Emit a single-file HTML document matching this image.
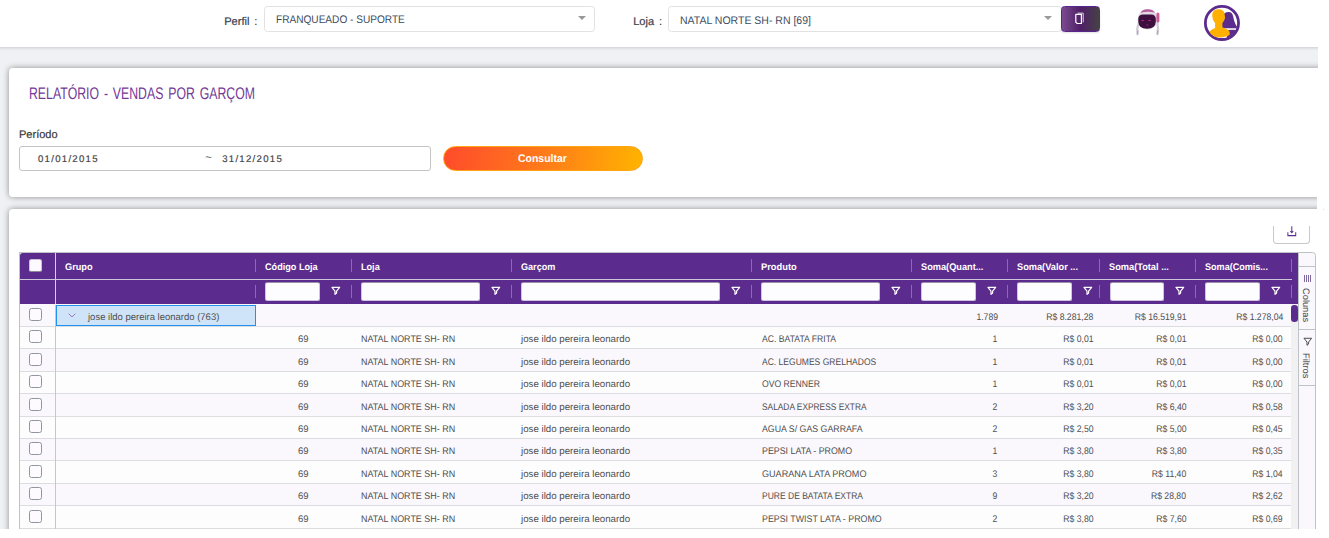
<!DOCTYPE html>
<html lang="pt-BR">
<head>
<meta charset="utf-8">
<title>Relatório - Vendas por Garçom</title>
<style>
*{box-sizing:border-box;margin:0;padding:0}
html,body{width:1329px;height:538px;overflow:hidden;background:#fff}
body{font-family:"Liberation Sans",sans-serif;color:#333;position:relative;text-rendering:geometricPrecision}
#app{position:absolute;left:0;top:0;width:1318px;height:529px;overflow:hidden;background:#f0f1f4}
.topbar{position:absolute;left:-10px;top:-10px;width:1350px;height:56.8px;background:#fff;box-shadow:0 1px 3px rgba(0,21,41,.16)}
.abs{position:absolute}
h1{font-weight:400}
.x{position:absolute;white-space:pre;line-height:20px;height:20px;transform-origin:0 50%}
.sel{position:absolute;top:6px;height:26px;border:1px solid #e2e2e2;border-radius:3.5px;background:#fff}
.caret{position:absolute;top:15.6px;width:0;height:0;border-left:4px solid transparent;border-right:4px solid transparent;border-top:4.5px solid #999}
.copybtn{position:absolute;left:1061px;top:6px;width:39px;height:26px;border-radius:3.5px;border:1px solid #5b2590;background:linear-gradient(90deg,#7a4b8e 0%,#4f1f68 50%,#464146 100%);box-shadow:0 1px 2px rgba(0,0,0,.12)}
.card{position:absolute;left:9.2px;width:1330px;background:#fff;border-radius:4px;box-shadow:0 0 6.2px rgba(0,0,0,.41)}
#c1{top:67.6px;height:129.6px}
#c2{top:208.7px;height:340px}
.range{position:absolute;left:19.2px;top:146.2px;width:411.6px;height:24.6px;border:1px solid #c4c4c4;border-radius:3px;background:#fff}
.btn{position:absolute;left:443px;top:146px;width:200px;height:25px;border-radius:12.5px;border:1px solid #ffa412;background:linear-gradient(100deg,#ff4b2b 0%,#ff7a1a 50%,#ffb400 100%)}
.dl{position:absolute;left:1273px;top:214px;width:37px;height:30px;border:1px solid #c8c8c8;border-top:none;border-radius:0 0 4px 4px;background:#fff}
.dl:before{content:"";position:absolute;left:-1px;right:-1px;top:0;height:11.6px;background:#fff}
.dl svg{position:absolute;left:13.2px;top:11.6px}
/* grid */
.gb{position:absolute;left:19.2px;top:252px;width:1px;height:300px;background:#bdc3c7}
.gt{position:absolute;left:19.2px;top:252px;width:1280px;height:1px;background:#bdc3c7}
.hdr{position:absolute;left:20px;top:252.8px;width:1278.2px;height:51.2px;background:#5b2c8e;border-radius:2.5px 0 0 0}
.hline{position:absolute;left:20px;top:279px;width:1272px;height:1px;background:#cfc6dc}
.sep{position:absolute;width:1px;background:rgba(255,255,255,.3)}
.pin{position:absolute;left:55px;top:252.8px;width:1px;height:51.2px;background:#d6cee2}
.fi{position:absolute;top:282px;height:18.6px;background:#fdfcff;border:1px solid #cfc4e0;border-top-color:#9a90aa;border-radius:2.5px}
.fn{position:absolute;top:286.1px}
.cb{position:absolute;left:29.3px;width:13.2px;height:13px;border:1px solid #8f96a0;border-radius:2.6px;background:#fdfbff}
.cb.h{background:#fcfaff;border-color:#c9c3d6;border-bottom-color:#8f8a9c;height:13.4px}
.row{position:absolute;left:20px;width:1271.4px;border-top:1px solid #dcdde0;background:#fdfdfe}
.row.o{background:#faf7fd}
.pinr{position:absolute;left:55px;top:305px;width:1px;height:230px;background:#c4c8cc}
.gcell{position:absolute;left:55.8px;top:305px;width:200.2px;height:20.6px;border:1px solid #2291ee;background:#cfe4f8}
.vs{position:absolute;left:1291.4px;top:304px;width:6.9px;height:250px;background:#f1f1f1}
.vs i{position:absolute;left:0;top:.6px;width:6.9px;height:17.4px;border-radius:3.3px;background:#5b2c8e}
.side{position:absolute;left:1297.9px;top:252px;width:18.2px;height:300px;border:1px solid #bdc3c7;border-radius:0 3.5px 0 0;background:#faf8fd}
.sl{position:absolute;left:1298.4px;width:17px;height:1px;background:#bdc3c7}
.st{position:absolute;left:1300.4px;writing-mode:vertical-rl;font-size:9.3px;line-height:12px;color:#444;white-space:nowrap}
</style>
</head>
<body>
<div id="app">
<div class="card" id="c1"></div>
<div class="card" id="c2"></div>
<h1 class="x" style="top:84px;font-size:16.9px;color:#733a98;word-spacing:2.0px;left:28.60px;transform:scaleX(0.727);">RELATÓRIO - VENDAS POR GARÇOM</h1>
<div class="x" style="top:125px;font-size:11.1px;color:#383838;left:18.60px;transform:scaleX(0.993);-webkit-text-stroke:.2px #383838;">Período</div>
<div class="range"></div>
<div class="x" style="top:150px;font-size:9.6px;color:#444;letter-spacing:1.28px;left:38.00px;-webkit-text-stroke:.18px #444;">01/01/2015</div>
<div class="x" style="top:147px;font-size:11.8px;color:#6a6a6a;left:205.20px;">~</div>
<div class="x" style="top:150px;font-size:9.6px;color:#444;letter-spacing:1.28px;left:222.20px;-webkit-text-stroke:.18px #444;">31/12/2015</div>
<div class="btn"></div>
<div class="x" style="top:149px;font-size:11px;color:#fff;font-weight:700;left:517.80px;transform:scaleX(0.950);">Consultar</div>
<div class="dl"><svg width="9.6" height="11" viewBox="0 0 11 11" preserveAspectRatio="none"><path d="M5.500 0.3V6.800M3.900 5.200L5.500 6.800L7.100 5.200M1 6.300V9.600H10V6.300" fill="none" stroke="#5b2c8e" stroke-width="1.15"/></svg></div>
<div class="gb"></div><div class="gt"></div>
<div class="hdr"></div>
<div class="hline"></div>
<div class="pin"></div>
<div class="cb h" style="top:258.6px"></div>
<div class="x" style="top:258px;font-size:9.6px;color:#fff;font-weight:700;left:65.20px;transform:scaleX(0.959);">Grupo</div>
<div class="sep" style="left:255.0px;top:259.2px;height:12.8px"></div>
<div class="sep" style="left:255.0px;top:285.2px;height:12.8px"></div>
<div class="x" style="top:258px;font-size:9.6px;color:#fff;font-weight:700;left:264.80px;transform:scaleX(0.949);">Código Loja</div>
<div class="sep" style="left:351.0px;top:259.2px;height:12.8px"></div>
<div class="sep" style="left:351.0px;top:285.2px;height:12.8px"></div>
<div class="fi" style="left:265.2px;width:54.6px"></div>
<svg class="fn" style="left:331.0px" width="9.6" height="9.6" viewBox="0 0 12 12"><path d="M10.8 1.6H1.2L5 6.300V10.4L7 8.800V6.300Z" fill="none" stroke="#fff" stroke-width="1.5" stroke-linejoin="round"/></svg>
<div class="x" style="top:258px;font-size:9.6px;color:#fff;font-weight:700;left:360.70px;transform:scaleX(0.948);">Loja</div>
<div class="sep" style="left:511.0px;top:259.2px;height:12.8px"></div>
<div class="sep" style="left:511.0px;top:285.2px;height:12.8px"></div>
<div class="fi" style="left:361.2px;width:118.6px"></div>
<svg class="fn" style="left:491.0px" width="9.6" height="9.6" viewBox="0 0 12 12"><path d="M10.8 1.6H1.2L5 6.300V10.4L7 8.800V6.300Z" fill="none" stroke="#fff" stroke-width="1.5" stroke-linejoin="round"/></svg>
<div class="x" style="top:258px;font-size:9.6px;color:#fff;font-weight:700;left:520.80px;transform:scaleX(0.946);">Garçom</div>
<div class="sep" style="left:751.0px;top:259.2px;height:12.8px"></div>
<div class="sep" style="left:751.0px;top:285.2px;height:12.8px"></div>
<div class="fi" style="left:521.2px;width:198.6px"></div>
<svg class="fn" style="left:731.0px" width="9.6" height="9.6" viewBox="0 0 12 12"><path d="M10.8 1.6H1.2L5 6.300V10.4L7 8.800V6.300Z" fill="none" stroke="#fff" stroke-width="1.5" stroke-linejoin="round"/></svg>
<div class="x" style="top:258px;font-size:9.6px;color:#fff;font-weight:700;left:761.20px;transform:scaleX(0.971);">Produto</div>
<div class="sep" style="left:911.0px;top:259.2px;height:12.8px"></div>
<div class="sep" style="left:911.0px;top:285.2px;height:12.8px"></div>
<div class="fi" style="left:761.2px;width:118.6px"></div>
<svg class="fn" style="left:891.0px" width="9.6" height="9.6" viewBox="0 0 12 12"><path d="M10.8 1.6H1.2L5 6.300V10.4L7 8.800V6.300Z" fill="none" stroke="#fff" stroke-width="1.5" stroke-linejoin="round"/></svg>
<div class="x" style="top:258px;font-size:9.6px;color:#fff;font-weight:700;left:921.40px;transform:scaleX(0.960);">Soma(Quant...</div>
<div class="sep" style="left:1007.0px;top:259.2px;height:12.8px"></div>
<div class="sep" style="left:1007.0px;top:285.2px;height:12.8px"></div>
<div class="fi" style="left:921.2px;width:54.6px"></div>
<svg class="fn" style="left:987.0px" width="9.6" height="9.6" viewBox="0 0 12 12"><path d="M10.8 1.6H1.2L5 6.300V10.4L7 8.800V6.300Z" fill="none" stroke="#fff" stroke-width="1.5" stroke-linejoin="round"/></svg>
<div class="x" style="top:258px;font-size:9.6px;color:#fff;font-weight:700;left:1017.10px;transform:scaleX(0.961);">Soma(Valor ...</div>
<div class="sep" style="left:1099.3px;top:259.2px;height:12.8px"></div>
<div class="sep" style="left:1099.3px;top:285.2px;height:12.8px"></div>
<div class="fi" style="left:1017.2px;width:54.7px"></div>
<svg class="fn" style="left:1083.1px" width="9.6" height="9.6" viewBox="0 0 12 12"><path d="M10.8 1.6H1.2L5 6.300V10.4L7 8.800V6.300Z" fill="none" stroke="#fff" stroke-width="1.5" stroke-linejoin="round"/></svg>
<div class="x" style="top:258px;font-size:9.6px;color:#fff;font-weight:700;left:1109.40px;transform:scaleX(0.962);">Soma(Total ...</div>
<div class="sep" style="left:1195.1px;top:259.2px;height:12.8px"></div>
<div class="sep" style="left:1195.1px;top:285.2px;height:12.8px"></div>
<div class="fi" style="left:1109.5px;width:54.4px"></div>
<svg class="fn" style="left:1175.1px" width="9.6" height="9.6" viewBox="0 0 12 12"><path d="M10.8 1.6H1.2L5 6.300V10.4L7 8.800V6.300Z" fill="none" stroke="#fff" stroke-width="1.5" stroke-linejoin="round"/></svg>
<div class="x" style="top:258px;font-size:9.6px;color:#fff;font-weight:700;left:1205.20px;transform:scaleX(0.944);">Soma(Comis...</div>
<div class="sep" style="left:1291.1px;top:259.2px;height:12.8px"></div>
<div class="sep" style="left:1291.1px;top:285.2px;height:12.8px"></div>
<div class="fi" style="left:1205.3px;width:54.6px"></div>
<svg class="fn" style="left:1271.1px" width="9.6" height="9.6" viewBox="0 0 12 12"><path d="M10.8 1.6H1.2L5 6.300V10.4L7 8.800V6.300Z" fill="none" stroke="#fff" stroke-width="1.5" stroke-linejoin="round"/></svg>
<div class="row o" style="top:304px;height:22px;border-top:none"></div>
<div class="row" style="top:326px;height:22px"></div>
<div class="row o" style="top:348px;height:23px"></div>
<div class="row" style="top:371px;height:22px"></div>
<div class="row o" style="top:393px;height:23px"></div>
<div class="row" style="top:416px;height:22px"></div>
<div class="row o" style="top:438px;height:22px"></div>
<div class="row" style="top:460px;height:23px"></div>
<div class="row o" style="top:483px;height:22px"></div>
<div class="row" style="top:505px;height:23px"></div>
<div class="row" style="top:528px;height:2px"></div>
<div class="pinr"></div>
<div class="gcell"></div>
<svg class="abs" style="left:68px;top:313px" width="8" height="5" viewBox="0 0 8 5"><path d="M0.7 0.7L4 4L7.300 0.7" fill="none" stroke="#9a78c0" stroke-width="1"/></svg>
<div class="x" style="top:308px;font-size:9.6px;color:#4f4f4f;left:87.60px;transform:scaleX(0.989);">jose ildo pereira leonardo (763)</div>
<div class="cb" style="top:308px"></div>
<div class="x" style="top:308px;font-size:9.6px;color:#4f4f4f;left:973.68px;transform-origin:24.02px 50%;transform:scaleX(0.900);">1.789</div>
<div class="x" style="top:308px;font-size:9.6px;color:#4f4f4f;left:1041.42px;transform-origin:52.28px 50%;transform:scaleX(0.900);">R$ 8.281,28</div>
<div class="x" style="top:308px;font-size:9.6px;color:#4f4f4f;left:1128.79px;transform-origin:57.61px 50%;transform:scaleX(0.900);">R$ 16.519,91</div>
<div class="x" style="top:308px;font-size:9.6px;color:#4f4f4f;left:1230.72px;transform-origin:52.28px 50%;transform:scaleX(0.900);">R$ 1.278,04</div>
<div class="cb" style="top:330px"></div>
<div class="x" style="top:330px;font-size:9.6px;color:#4f4f4f;left:298.20px;transform:scaleX(0.993);">69</div>
<div class="x" style="top:330px;font-size:9.6px;color:#4f4f4f;left:361.20px;transform:scaleX(0.933);">NATAL NORTE SH- RN</div>
<div class="x" style="top:330px;font-size:9.6px;color:#4f4f4f;left:520.90px;transform:scaleX(1.012);">jose ildo pereira leonardo</div>
<div class="x" style="top:330px;font-size:9.6px;color:#4f4f4f;left:761.70px;transform:scaleX(0.900);">AC. BATATA FRITA</div>
<div class="x" style="top:330px;font-size:9.6px;color:#4f4f4f;left:992.36px;transform-origin:5.34px 50%;transform:scaleX(0.900);">1</div>
<div class="x" style="top:330px;font-size:9.6px;color:#4f4f4f;left:1060.09px;transform-origin:33.61px 50%;transform:scaleX(0.900);">R$ 0,01</div>
<div class="x" style="top:330px;font-size:9.6px;color:#4f4f4f;left:1152.79px;transform-origin:33.61px 50%;transform:scaleX(0.900);">R$ 0,01</div>
<div class="x" style="top:330px;font-size:9.6px;color:#4f4f4f;left:1249.39px;transform-origin:33.61px 50%;transform:scaleX(0.900);">R$ 0,00</div>
<div class="cb" style="top:353px"></div>
<div class="x" style="top:353px;font-size:9.6px;color:#4f4f4f;left:298.20px;transform:scaleX(0.993);">69</div>
<div class="x" style="top:353px;font-size:9.6px;color:#4f4f4f;left:361.20px;transform:scaleX(0.933);">NATAL NORTE SH- RN</div>
<div class="x" style="top:353px;font-size:9.6px;color:#4f4f4f;left:520.90px;transform:scaleX(1.012);">jose ildo pereira leonardo</div>
<div class="x" style="top:353px;font-size:9.6px;color:#4f4f4f;left:761.70px;transform:scaleX(0.889);">AC. LEGUMES GRELHADOS</div>
<div class="x" style="top:353px;font-size:9.6px;color:#4f4f4f;left:992.36px;transform-origin:5.34px 50%;transform:scaleX(0.900);">1</div>
<div class="x" style="top:353px;font-size:9.6px;color:#4f4f4f;left:1060.09px;transform-origin:33.61px 50%;transform:scaleX(0.900);">R$ 0,01</div>
<div class="x" style="top:353px;font-size:9.6px;color:#4f4f4f;left:1152.79px;transform-origin:33.61px 50%;transform:scaleX(0.900);">R$ 0,01</div>
<div class="x" style="top:353px;font-size:9.6px;color:#4f4f4f;left:1249.39px;transform-origin:33.61px 50%;transform:scaleX(0.900);">R$ 0,00</div>
<div class="cb" style="top:375px"></div>
<div class="x" style="top:375px;font-size:9.6px;color:#4f4f4f;left:298.20px;transform:scaleX(0.993);">69</div>
<div class="x" style="top:375px;font-size:9.6px;color:#4f4f4f;left:361.20px;transform:scaleX(0.933);">NATAL NORTE SH- RN</div>
<div class="x" style="top:375px;font-size:9.6px;color:#4f4f4f;left:520.90px;transform:scaleX(1.012);">jose ildo pereira leonardo</div>
<div class="x" style="top:375px;font-size:9.6px;color:#4f4f4f;left:761.70px;transform:scaleX(0.901);">OVO RENNER</div>
<div class="x" style="top:375px;font-size:9.6px;color:#4f4f4f;left:992.36px;transform-origin:5.34px 50%;transform:scaleX(0.900);">1</div>
<div class="x" style="top:375px;font-size:9.6px;color:#4f4f4f;left:1060.09px;transform-origin:33.61px 50%;transform:scaleX(0.900);">R$ 0,01</div>
<div class="x" style="top:375px;font-size:9.6px;color:#4f4f4f;left:1152.79px;transform-origin:33.61px 50%;transform:scaleX(0.900);">R$ 0,01</div>
<div class="x" style="top:375px;font-size:9.6px;color:#4f4f4f;left:1249.39px;transform-origin:33.61px 50%;transform:scaleX(0.900);">R$ 0,00</div>
<div class="cb" style="top:398px"></div>
<div class="x" style="top:398px;font-size:9.6px;color:#4f4f4f;left:298.20px;transform:scaleX(0.993);">69</div>
<div class="x" style="top:398px;font-size:9.6px;color:#4f4f4f;left:361.20px;transform:scaleX(0.933);">NATAL NORTE SH- RN</div>
<div class="x" style="top:398px;font-size:9.6px;color:#4f4f4f;left:520.90px;transform:scaleX(1.012);">jose ildo pereira leonardo</div>
<div class="x" style="top:398px;font-size:9.6px;color:#4f4f4f;left:761.70px;transform:scaleX(0.871);">SALADA EXPRESS EXTRA</div>
<div class="x" style="top:398px;font-size:9.6px;color:#4f4f4f;left:992.36px;transform-origin:5.34px 50%;transform:scaleX(0.900);">2</div>
<div class="x" style="top:398px;font-size:9.6px;color:#4f4f4f;left:1060.09px;transform-origin:33.61px 50%;transform:scaleX(0.900);">R$ 3,20</div>
<div class="x" style="top:398px;font-size:9.6px;color:#4f4f4f;left:1152.79px;transform-origin:33.61px 50%;transform:scaleX(0.900);">R$ 6,40</div>
<div class="x" style="top:398px;font-size:9.6px;color:#4f4f4f;left:1249.39px;transform-origin:33.61px 50%;transform:scaleX(0.900);">R$ 0,58</div>
<div class="cb" style="top:420px"></div>
<div class="x" style="top:420px;font-size:9.6px;color:#4f4f4f;left:298.20px;transform:scaleX(0.993);">69</div>
<div class="x" style="top:420px;font-size:9.6px;color:#4f4f4f;left:361.20px;transform:scaleX(0.933);">NATAL NORTE SH- RN</div>
<div class="x" style="top:420px;font-size:9.6px;color:#4f4f4f;left:520.90px;transform:scaleX(1.012);">jose ildo pereira leonardo</div>
<div class="x" style="top:420px;font-size:9.6px;color:#4f4f4f;left:761.70px;transform:scaleX(0.916);">AGUA S/ GAS GARRAFA</div>
<div class="x" style="top:420px;font-size:9.6px;color:#4f4f4f;left:992.36px;transform-origin:5.34px 50%;transform:scaleX(0.900);">2</div>
<div class="x" style="top:420px;font-size:9.6px;color:#4f4f4f;left:1060.09px;transform-origin:33.61px 50%;transform:scaleX(0.900);">R$ 2,50</div>
<div class="x" style="top:420px;font-size:9.6px;color:#4f4f4f;left:1152.79px;transform-origin:33.61px 50%;transform:scaleX(0.900);">R$ 5,00</div>
<div class="x" style="top:420px;font-size:9.6px;color:#4f4f4f;left:1249.39px;transform-origin:33.61px 50%;transform:scaleX(0.900);">R$ 0,45</div>
<div class="cb" style="top:442px"></div>
<div class="x" style="top:442px;font-size:9.6px;color:#4f4f4f;left:298.20px;transform:scaleX(0.993);">69</div>
<div class="x" style="top:442px;font-size:9.6px;color:#4f4f4f;left:361.20px;transform:scaleX(0.933);">NATAL NORTE SH- RN</div>
<div class="x" style="top:442px;font-size:9.6px;color:#4f4f4f;left:520.90px;transform:scaleX(1.012);">jose ildo pereira leonardo</div>
<div class="x" style="top:442px;font-size:9.6px;color:#4f4f4f;left:761.70px;transform:scaleX(0.921);">PEPSI LATA - PROMO</div>
<div class="x" style="top:442px;font-size:9.6px;color:#4f4f4f;left:992.36px;transform-origin:5.34px 50%;transform:scaleX(0.900);">1</div>
<div class="x" style="top:442px;font-size:9.6px;color:#4f4f4f;left:1060.09px;transform-origin:33.61px 50%;transform:scaleX(0.900);">R$ 3,80</div>
<div class="x" style="top:442px;font-size:9.6px;color:#4f4f4f;left:1152.79px;transform-origin:33.61px 50%;transform:scaleX(0.900);">R$ 3,80</div>
<div class="x" style="top:442px;font-size:9.6px;color:#4f4f4f;left:1249.39px;transform-origin:33.61px 50%;transform:scaleX(0.900);">R$ 0,35</div>
<div class="cb" style="top:465px"></div>
<div class="x" style="top:465px;font-size:9.6px;color:#4f4f4f;left:298.20px;transform:scaleX(0.993);">69</div>
<div class="x" style="top:465px;font-size:9.6px;color:#4f4f4f;left:361.20px;transform:scaleX(0.933);">NATAL NORTE SH- RN</div>
<div class="x" style="top:465px;font-size:9.6px;color:#4f4f4f;left:520.90px;transform:scaleX(1.012);">jose ildo pereira leonardo</div>
<div class="x" style="top:465px;font-size:9.6px;color:#4f4f4f;left:761.70px;transform:scaleX(0.945);">GUARANA LATA PROMO</div>
<div class="x" style="top:465px;font-size:9.6px;color:#4f4f4f;left:992.36px;transform-origin:5.34px 50%;transform:scaleX(0.900);">3</div>
<div class="x" style="top:465px;font-size:9.6px;color:#4f4f4f;left:1060.09px;transform-origin:33.61px 50%;transform:scaleX(0.900);">R$ 3,80</div>
<div class="x" style="top:465px;font-size:9.6px;color:#4f4f4f;left:1148.17px;transform-origin:38.23px 50%;transform:scaleX(0.900);">R$ 11,40</div>
<div class="x" style="top:465px;font-size:9.6px;color:#4f4f4f;left:1249.39px;transform-origin:33.61px 50%;transform:scaleX(0.900);">R$ 1,04</div>
<div class="cb" style="top:487px"></div>
<div class="x" style="top:487px;font-size:9.6px;color:#4f4f4f;left:298.20px;transform:scaleX(0.993);">69</div>
<div class="x" style="top:487px;font-size:9.6px;color:#4f4f4f;left:361.20px;transform:scaleX(0.933);">NATAL NORTE SH- RN</div>
<div class="x" style="top:487px;font-size:9.6px;color:#4f4f4f;left:520.90px;transform:scaleX(1.012);">jose ildo pereira leonardo</div>
<div class="x" style="top:487px;font-size:9.6px;color:#4f4f4f;left:761.70px;transform:scaleX(0.887);">PURE DE BATATA EXTRA</div>
<div class="x" style="top:487px;font-size:9.6px;color:#4f4f4f;left:992.36px;transform-origin:5.34px 50%;transform:scaleX(0.900);">9</div>
<div class="x" style="top:487px;font-size:9.6px;color:#4f4f4f;left:1060.09px;transform-origin:33.61px 50%;transform:scaleX(0.900);">R$ 3,20</div>
<div class="x" style="top:487px;font-size:9.6px;color:#4f4f4f;left:1147.46px;transform-origin:38.94px 50%;transform:scaleX(0.900);">R$ 28,80</div>
<div class="x" style="top:487px;font-size:9.6px;color:#4f4f4f;left:1249.39px;transform-origin:33.61px 50%;transform:scaleX(0.900);">R$ 2,62</div>
<div class="cb" style="top:510px"></div>
<div class="x" style="top:510px;font-size:9.6px;color:#4f4f4f;left:298.20px;transform:scaleX(0.993);">69</div>
<div class="x" style="top:510px;font-size:9.6px;color:#4f4f4f;left:361.20px;transform:scaleX(0.933);">NATAL NORTE SH- RN</div>
<div class="x" style="top:510px;font-size:9.6px;color:#4f4f4f;left:520.90px;transform:scaleX(1.012);">jose ildo pereira leonardo</div>
<div class="x" style="top:510px;font-size:9.6px;color:#4f4f4f;left:761.70px;transform:scaleX(0.921);">PEPSI TWIST LATA - PROMO</div>
<div class="x" style="top:510px;font-size:9.6px;color:#4f4f4f;left:992.36px;transform-origin:5.34px 50%;transform:scaleX(0.900);">2</div>
<div class="x" style="top:510px;font-size:9.6px;color:#4f4f4f;left:1060.09px;transform-origin:33.61px 50%;transform:scaleX(0.900);">R$ 3,80</div>
<div class="x" style="top:510px;font-size:9.6px;color:#4f4f4f;left:1152.79px;transform-origin:33.61px 50%;transform:scaleX(0.900);">R$ 7,60</div>
<div class="x" style="top:510px;font-size:9.6px;color:#4f4f4f;left:1249.39px;transform-origin:33.61px 50%;transform:scaleX(0.900);">R$ 0,69</div>
<div class="vs"><i></i></div>
<div class="side"></div>
<div class="sl" style="top:266px"></div>
<svg class="abs" style="left:1303px;top:274.600px" width="9" height="7.4" viewBox="0 0 9 7.4" shape-rendering="crispEdges"><path d="M1 0V7.400M3.300 0V7.400M5.600 0V7.400M7.900 0V7.400" stroke="#7d6a9c" stroke-width="1" fill="none"/></svg>
<div class="st" style="top:287.6px">Colunas</div>
<div class="sl" style="top:328.6px"></div>
<svg class="abs" style="left:1302.8px;top:337.1px" width="9.6" height="9.6" viewBox="0 0 12 12"><path d="M10.8 1.6H1.2L5 6.300V10.4L7 8.800V6.300Z" fill="none" stroke="#444" stroke-width="1.2" stroke-linejoin="round"/></svg>
<div class="st" style="top:352.7px">Filtros</div>
<div class="sl" style="top:384.8px"></div>
<div class="abs" style="left:1317px;top:68px;width:1px;height:470px;background:#fff"></div>
<div class="topbar"></div>
<div class="x" style="top:12px;font-size:11.1px;color:#3a3f4c;word-spacing:1.7px;left:224.20px;-webkit-text-stroke:.2px #3a3f4c;">Perfil :</div>
<div class="sel" style="left:264.2px;width:330.4px"></div><i class="caret" style="left:578px"></i>
<div class="x" style="top:10px;font-size:11px;color:#3d4c61;left:275.60px;transform:scaleX(0.918);">FRANQUEADO - SUPORTE</div>
<div class="x" style="top:12px;font-size:11.1px;color:#3a3f4c;word-spacing:1.7px;left:633.20px;-webkit-text-stroke:.2px #3a3f4c;">Loja :</div>
<div class="sel" style="left:668px;width:394px"></div><i class="caret" style="left:1044px"></i>
<div class="x" style="top:11px;font-size:11px;color:#3d4c61;left:679.60px;transform:scaleX(0.955);">NATAL NORTE SH- RN [69]</div>
<div class="copybtn"><svg class="abs" style="left:11px;top:4px" width="14" height="15" viewBox="0 0 14 15"><path d="M2.800 3.300H8.400V12.500H4.200L2.800 11.100Z" fill="none" stroke="#fff" stroke-width="1.2" stroke-linejoin="round"/><path d="M4.600 2.100H10.200V11.400" fill="none" stroke="#fff" stroke-width="1" opacity=".8"/></svg></div>
<svg class="abs" style="left:1130px;top:4px" width="36" height="36" viewBox="0 0 36 36">
<path d="M8.400 19.500Q6.600 25 7.600 30.200M27.400 19Q28.600 25 27.400 30.200" fill="none" stroke="#d5cdd9" stroke-width="2.400" stroke-linecap="round"/>
<path d="M7.800 26.500L7.400 30M27.600 26.500L27.500 30" fill="none" stroke="#9a7fa8" stroke-width="1.200" opacity=".6"/>
<ellipse cx="17.600" cy="15.300" rx="10" ry="10.300" fill="#e0dae4"/>
<path d="M10.500 8.800Q12 5.400 17.500 5.200Q23 5.200 25 8.600Q18 6.600 10.500 8.800Z" fill="#a83286" opacity=".75"/>
<rect x="26.400" y="8.600" width="3" height="9.800" rx="1.500" fill="#cc5c98"/>
<path d="M8.300 15Q8.400 10.600 13 10.500H21.200Q25.700 10.600 25.800 15V17.500Q25.600 24.700 17 24.700Q8.500 24.700 8.300 17.500Z" fill="#3d0f3c"/>
<rect x="11.400" y="15.900" width="2.400" height="1" rx=".5" fill="#d0209a"/><rect x="18.400" y="15.900" width="2.400" height="1" rx=".5" fill="#d0209a"/>
<rect x="16.400" y="20.600" width="2" height="1" rx=".5" fill="#c0188a"/>
</svg>
<svg class="abs" style="left:1203px;top:4px" width="38" height="38" viewBox="0 0 38 38">
<circle cx="18.950" cy="18.900" r="16.600" fill="#fff" stroke="#5b2c8e" stroke-width="2.800"/>
<clipPath id="cp"><circle cx="18.950" cy="18.900" r="15.600"/></clipPath>
<g clip-path="url(#cp)">
<path d="M25.700 8c2.500 0 4 1.800 4.500 4.600.6 3.600 1.800 7.600 4.200 10.800.3.400.1.800-.4.800H18V13c1.600-3 4.400-5 7.700-5z" fill="#5b2c8e"/>
<path d="M24 26l7-.3c2 .6 3.600 1.600 5 3V38H24z" fill="#5b2c8e"/>
<path d="M15.500 5.200c3.900 0 6.200 2.300 6.200 5.800l.3 2.600c0 1.400-.5 2.400-1.100 3.200-.4 1-.9 1.700-1.500 2.200v4.200l4.600 2c1.800.8 2.700 2 2.700 3.800v1.800c-2.600 2-6 2.600-10.200 2.600-4.100 0-7.600-.6-9.800-2.600V29c0-1.800.9-3 2.700-3.800l2.700-1.200V19c-.6-.5-1.100-1.200-1.500-2.200-.6-.8-1.100-1.800-1.100-3.200L9.200 11c0-3.500 2.400-5.800 6.300-5.800z" fill="#ffb000"/>
</g>
</svg>
</div>
<div class="abs" style="left:1322.5px;top:209px;width:1.5px;height:1px;background:#dcdcdc"></div>
</body>
</html>
